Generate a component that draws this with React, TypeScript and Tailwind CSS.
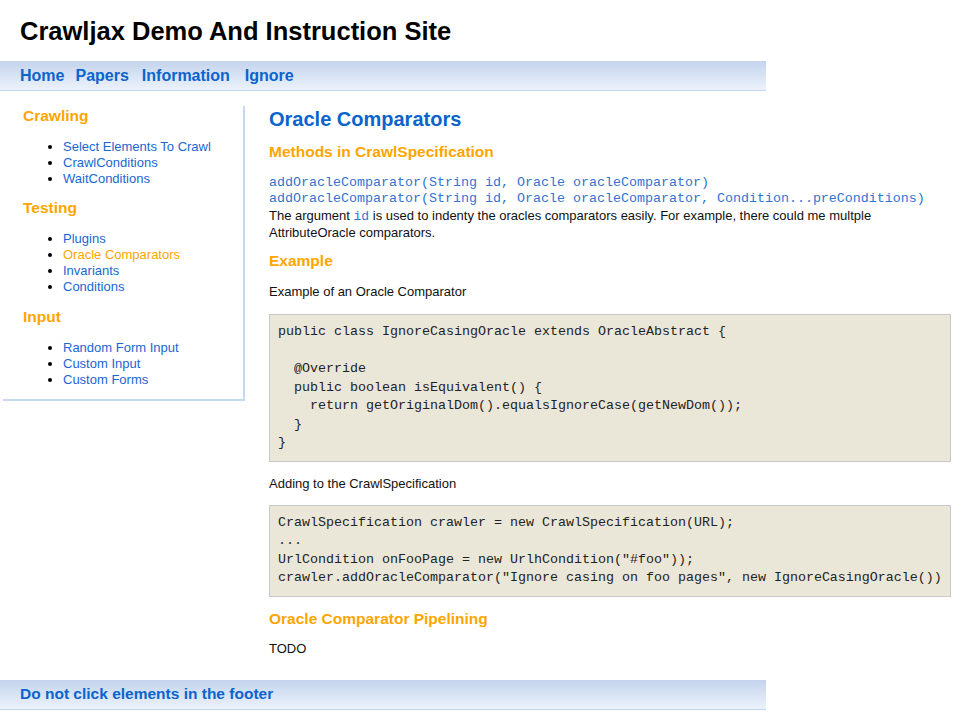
import React from "react";

const code1 = `public class IgnoreCasingOracle extends OracleAbstract {

  @Override
  public boolean isEquivalent() {
    return getOriginalDom().equalsIgnoreCase(getNewDom());
  }
}`;

const code2 = `CrawlSpecification crawler = new CrawlSpecification(URL);
...
UrlCondition onFooPage = new UrlhCondition("#foo"));
crawler.addOracleComparator("Ignore casing on foo pages", new IgnoreCasingOracle())`;

function SideSection({ title, items, className }: { title: string; items: { label: string; active?: boolean }[]; className?: string }) {
  return (
    <div className={className}>
      <h3 className="text-[15.5px] leading-5 font-bold text-[#ffa500]">{title}</h3>
      <ul className="mt-[13px] list-disc pl-10 text-[13px] leading-4">
        {items.map((it) => (
          <li key={it.label} className="text-black">
            <a className={it.active ? "text-[#ffa500]" : "text-[#1a66d2]"} href="#">
              {it.label}
            </a>
          </li>
        ))}
      </ul>
    </div>
  );
}

export default function App() {
  return (
    <div className="min-h-[720px] bg-white text-black font-['Liberation_Sans',Arial,sans-serif]">
      <header className="h-[61px] pl-5 pt-[15px]">
        <h1 className="text-[25.5px] leading-[32px] font-bold text-black">Crawljax Demo And Instruction Site</h1>
      </header>
      <nav className="w-[766px] h-[30px] border-b border-[#c3d5ef] bg-gradient-to-b from-[#c4d4ed] to-[#ecf2fb] pl-5 flex items-center text-[16px] font-bold text-[#0a64cc]">
        <a href="#">Home</a>
        <a href="#" className="ml-[11px]">Papers</a>
        <a href="#" className="ml-[13px]">Information</a>
        <a href="#" className="ml-[15px]">Ignore</a>
      </nav>
      <div className="flex items-start">
        <aside className="ml-[3px] mt-[15px] w-[242px] border-r-2 border-b-2 border-[#c6d7f0] pl-5 pb-[11px]">
          <SideSection
            title="Crawling"
            items={[{ label: "Select Elements To Crawl" }, { label: "CrawlConditions" }, { label: "WaitConditions" }]}
          />
          <SideSection
            className="mt-[11px]"
            title="Testing"
            items={[{ label: "Plugins" }, { label: "Oracle Comparators", active: true }, { label: "Invariants" }, { label: "Conditions" }]}
          />
          <SideSection
            className="mt-3"
            title="Input"
            items={[{ label: "Random Form Input" }, { label: "Custom Input" }, { label: "Custom Forms" }]}
          />
        </aside>
        <main className="ml-6 mt-4 w-[682px] text-[13px]">
          <h1 className="text-[20px] leading-6 font-bold text-[#0a64cc]">Oracle Comparators</h1>
          <h2 className="mt-3 text-[15.5px] leading-[18px] font-bold text-[#ffa500]">Methods in CrawlSpecification</h2>
          <div className="mt-[14px] font-['Liberation_Mono','Courier_New',monospace] text-[13.33px] leading-4 text-[#2f74d0] whitespace-pre">
            <div>addOracleComparator(String id, Oracle oracleComparator)</div>
            <div>addOracleComparator(String id, Oracle oracleComparator, Condition...preConditions)</div>
          </div>
          <p className="leading-[17px] text-[#111]">
            The argument{" "}
            <code className="font-['Liberation_Mono','Courier_New',monospace] text-[13px] leading-none text-[#2f74d0]">id</code> is used to
            indenty the oracles comparators easily. For example, there could me multple AttributeOracle comparators.
          </p>
          <h2 className="mt-[11px] text-[15.5px] leading-[18px] font-bold text-[#ffa500]">Example</h2>
          <p className="mt-[13px] leading-[17px] text-[#111]">Example of an Oracle Comparator</p>
          <pre className="mt-[14px] border border-[#c9c9c9] bg-[#ebe7d8] p-2 font-['Liberation_Mono','Courier_New',monospace] text-[13.33px] leading-[18.5px] text-[#222] whitespace-pre">
            {code1}
          </pre>
          <p className="mt-[13px] leading-[17px] text-[#111]">Adding to the CrawlSpecification</p>
          <pre className="mt-[13px] border border-[#c9c9c9] bg-[#ebe7d8] p-2 font-['Liberation_Mono','Courier_New',monospace] text-[13.33px] leading-[18.5px] text-[#222] whitespace-pre">
            {code2}
          </pre>
          <h2 className="mt-[13px] text-[15.5px] leading-[18px] font-bold text-[#ffa500]">Oracle Comparator Pipelining</h2>
          <p className="mt-3 leading-[17px] text-[#111]">TODO</p>
        </main>
      </div>
      <footer className="mt-[23px] w-[766px] h-[30px] border-b border-[#c3d5ef] bg-gradient-to-b from-[#c4d4ed] to-[#ecf2fb] pl-5 flex items-center text-[15.5px] font-bold text-[#0a64cc]">
        Do not click elements in the footer
      </footer>
    </div>
  );
}
